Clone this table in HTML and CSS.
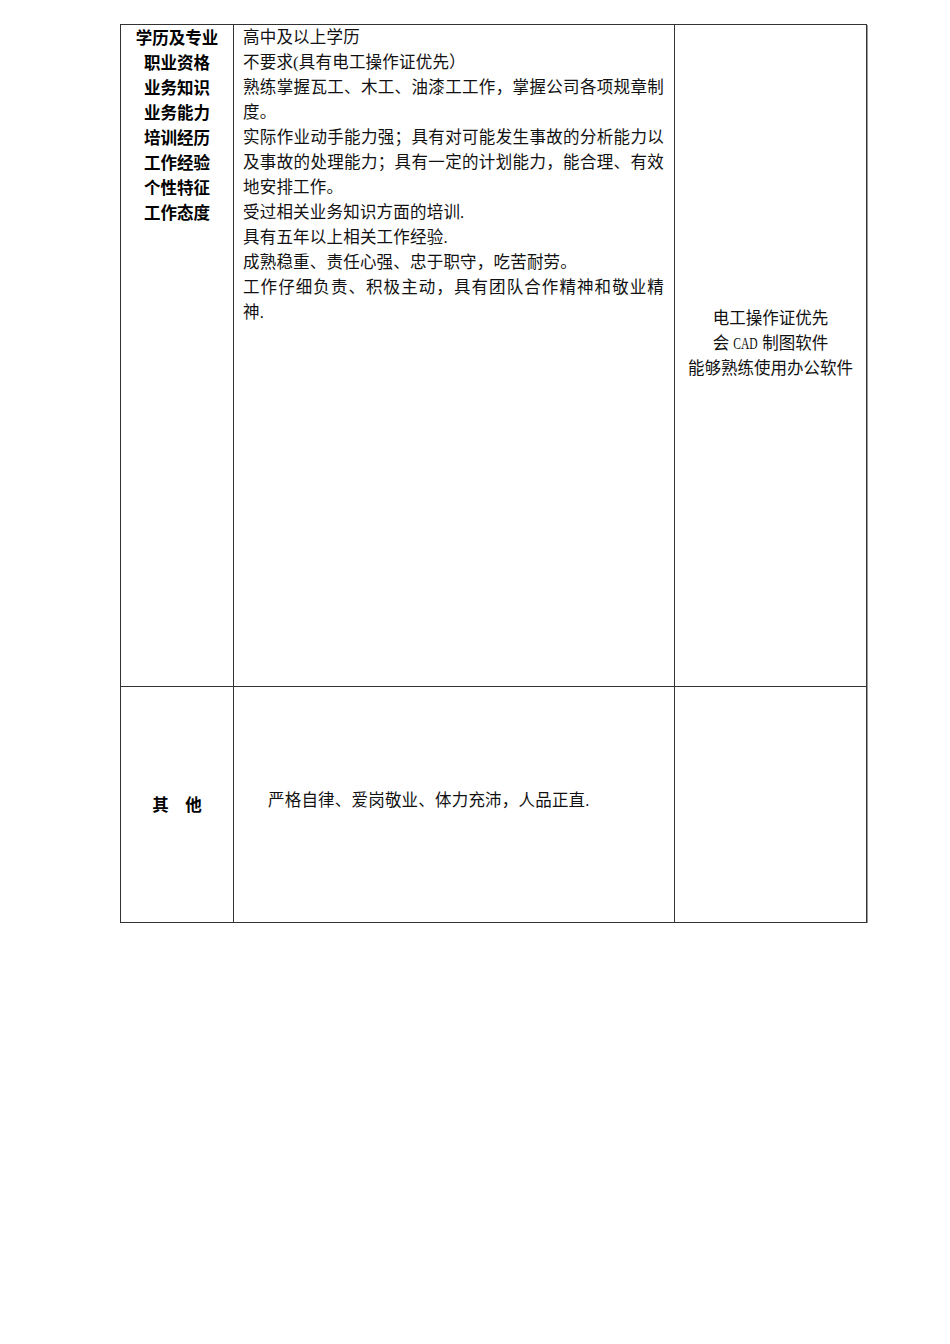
FILE: index.html
```html
<!DOCTYPE html>
<html lang="zh-CN">
<head>
<meta charset="utf-8">
<title>岗位说明</title>
<link rel="stylesheet" href="styles.css">
</head>
<body>
<div class="page">
  <table class="sheet">
    <colgroup>
      <col class="c-label">
      <col class="c-main">
      <col class="c-side">
    </colgroup>
    <tr class="row-req">
      <td class="label top">
        <div>学历及专业</div>
        <div>职业资格</div>
        <div>业务知识</div>
        <div>业务能力</div>
        <div>培训经历</div>
        <div>工作经验</div>
        <div>个性特征</div>
        <div>工作态度</div>
      </td>
      <td class="main top">
        <p>高中及以上学历</p>
        <p>不要求(具有电工操作证优先）</p>
        <p>熟练掌握瓦工、木工、油漆工工作，掌握公司各项规章制度。</p>
        <p>实际作业动手能力强；具有对可能发生事故的分析能力以及事故的处理能力；具有一定的计划能力，能合理、有效地安排工作。</p>
        <p>受过相关业务知识方面的培训.</p>
        <p>具有五年以上相关工作经验.</p>
        <p>成熟稳重、责任心强、忠于职守，吃苦耐劳。</p>
        <p>工作仔细负责、积极主动，具有团队合作精神和敬业精神.</p>
      </td>
      <td class="side">
        <p>电工操作证优先</p>
        <p>会 <span class="latin">CAD</span> 制图软件</p>
        <p>能够熟练使用办公软件</p>
      </td>
    </tr>
    <tr class="row-other">
      <td class="label mid">其　他</td>
      <td class="main mid"><p class="indent">严格自律、爱岗敬业、体力充沛，人品正直.</p></td>
      <td class="side"></td>
    </tr>
  </table>
</div>
</body>
</html>
```

FILE: styles.css
```css
html, body {
  margin: 0;
  padding: 0;
  background: #ffffff;
}

.page {
  padding: 24px 0 0 120px;
}

.sheet {
  border-collapse: collapse;
  table-layout: fixed;
  width: 746px;
  font-family: "Liberation Serif", "Noto Sans CJK SC", serif;
  font-size: 16.5px;
  line-height: 25px;
  color: #111111;
  box-shadow: 1px 1px 0 #9a9a9a;
}

.c-label { width: 113px; }
.c-main { width: 441px; }
.c-side { width: 192px; }

.sheet td {
  border: 1px solid #333333;
  padding: 0;
}

.row-req { height: 662px; }
.row-other { height: 236px; }

.top { vertical-align: top; }

.label {
  text-align: center;
  font-family: "Noto Sans CJK SC", sans-serif;
  font-weight: 700;
  color: #000000;
}

.label.mid {
  vertical-align: middle;
}

.main {
  padding: 0 10px 0 9px !important;
  letter-spacing: 0.2px;
}

.main p,
.side p {
  margin: 0;
  text-align: justify;
}

.main.mid {
  vertical-align: middle;
  padding-bottom: 8px !important;
}

.indent {
  text-indent: 25px;
}

.side {
  vertical-align: middle;
  text-align: center;
  padding-bottom: 24px !important;
}

.side p {
  text-align: center;
}

.latin {
  display: inline-block;
  transform: scaleX(0.7);
  margin: 0 -5px;
}
```
